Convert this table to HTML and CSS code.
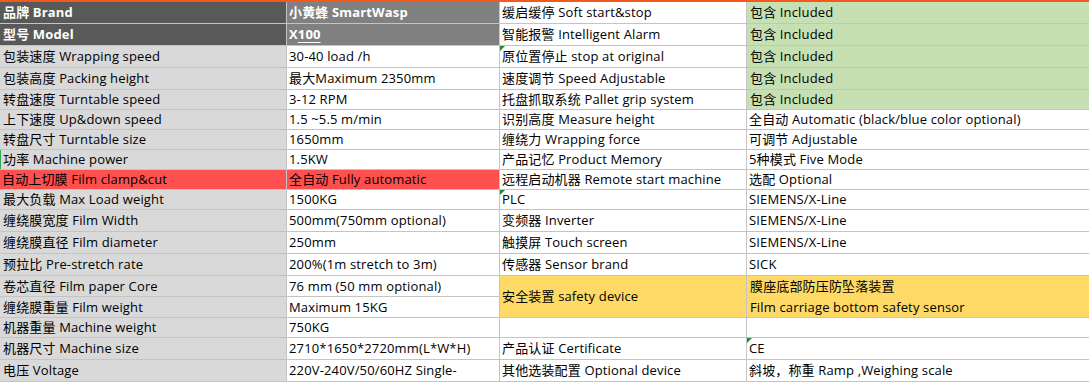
FILE: index.html
```html
<!DOCTYPE html>
<html lang="zh-CN">
<head>
<meta charset="utf-8">
<title>SmartWasp X100</title>
<link rel="stylesheet" href="styles.css">
</head>
<body>
<div class="sheet">
  <div class="c hd-a">品牌 Brand</div>
  <div class="c hd-b">小黄蜂 SmartWasp</div>
  <div class="c w">缓启缓停 Soft start&amp;stop</div>
  <div class="c green">包含 Included</div>

  <div class="c hd-a">型号 Model</div>
  <div class="c hd-b">X<span class="ul">100</span></div>
  <div class="c w">智能报警 Intelligent Alarm</div>
  <div class="c green">包含 Included</div>

  <div class="c g">包装速度 Wrapping speed</div>
  <div class="c w">30-40 load /h</div>
  <div class="c w note">原位置停止 stop at original</div>
  <div class="c green">包含 Included</div>

  <div class="c g">包装高度 Packing height</div>
  <div class="c w">最大Maximum 2350mm</div>
  <div class="c w">速度调节 Speed Adjustable</div>
  <div class="c green">包含 Included</div>

  <div class="c g">转盘速度 Turntable speed</div>
  <div class="c w">3-12 RPM</div>
  <div class="c w">托盘抓取系统 Pallet grip system</div>
  <div class="c green">包含 Included</div>

  <div class="c g">上下速度 Up&amp;down speed</div>
  <div class="c w">1.5 ~5.5 m/min</div>
  <div class="c w">识别高度 Measure height</div>
  <div class="c w">全自动 Automatic (black/blue color optional)</div>

  <div class="c g">转盘尺寸 Turntable size</div>
  <div class="c w">1650mm</div>
  <div class="c w">缠绕力 Wrapping force</div>
  <div class="c w">可调节 Adjustable</div>

  <div class="c g mark">功率 Machine power</div>
  <div class="c w">1.5KW</div>
  <div class="c w">产品记忆 Product Memory</div>
  <div class="c w">5种模式 Five Mode</div>

  <div class="c red">自动上切膜 Film clamp&amp;cut</div>
  <div class="c red">全自动 Fully automatic</div>
  <div class="c w">远程启动机器 Remote start machine</div>
  <div class="c w">选配 Optional</div>

  <div class="c g">最大负载 Max Load weight</div>
  <div class="c w">1500KG</div>
  <div class="c w note">PLC</div>
  <div class="c w">SIEMENS/X-Line</div>

  <div class="c g">缠绕膜宽度 Film Width</div>
  <div class="c w">500mm(750mm optional)</div>
  <div class="c w">变频器 Inverter</div>
  <div class="c w">SIEMENS/X-Line</div>

  <div class="c g">缠绕膜直径 Film diameter</div>
  <div class="c w">250mm</div>
  <div class="c w">触摸屏 Touch screen</div>
  <div class="c w">SIEMENS/X-Line</div>

  <div class="c g">预拉比 Pre-stretch rate</div>
  <div class="c w">200%(1m stretch to 3m)</div>
  <div class="c w">传感器 Sensor brand</div>
  <div class="c w">SICK</div>

  <div class="c g">卷芯直径 Film paper Core</div>
  <div class="c w">76 mm (50 mm optional)</div>
  <div class="c yellow span2">安全装置 safety device</div>
  <div class="c yellow span2 stack"><span class="line">膜座底部防压防坠落装置</span><span class="line">Film carriage bottom safety sensor</span></div>

  <div class="c g">缠绕膜重量 Film weight</div>
  <div class="c w">Maximum 15KG</div>

  <div class="c g">机器重量 Machine weight</div>
  <div class="c w">750KG</div>
  <div class="c w"></div>
  <div class="c w"></div>

  <div class="c g">机器尺寸 Machine size</div>
  <div class="c w">2710*1650*2720mm(L*W*H)</div>
  <div class="c w">产品认证 Certificate</div>
  <div class="c w note">CE</div>

  <div class="c g">电压 Voltage</div>
  <div class="c w">220V-240V/50/60HZ Single-</div>
  <div class="c w">其他选装配置 Optional device</div>
  <div class="c w">斜坡，称重 Ramp ,Weighing scale</div>
</div>
</body>
</html>
```

FILE: styles.css
```css
html, body {
  margin: 0;
  padding: 0;
  background: #ffffff;
}

.sheet {
  display: grid;
  width: 1089px;
  grid-template-columns: 286px 212px 246px 1fr;
  grid-template-rows: 21px 21px 21px 21px 19px 19px 19px 19px 19px 19px 21px 21px 21px 20px 20px 19px 21px 21px;
  gap: 1px;
  background: #c4c4c4;
  border-top: 2px solid #f3591f;
  border-bottom: 1px solid #c4c4c4;
  font-family: "Open Sans", "Noto Sans CJK SC", sans-serif;
  font-size: 13px;
  letter-spacing: 0.15px;
  color: #000;
}

.c {
  position: relative;
  display: flex;
  align-items: center;
  padding-left: 2px;
  white-space: nowrap;
  overflow: hidden;
  line-height: 1;
}

.hd-a {
  background: #595959;
  color: #fff;
  font-weight: 700;
  padding-left: 3px;
}

.hd-b {
  background: #808080;
  color: #fff;
  font-weight: 700;
}

.ul {
  text-decoration: underline;
  text-underline-offset: 3px;
}

.g {
  background: #d9d9d9;
  padding-left: 3px;
}

.w {
  background: #ffffff;
}

.green {
  background: #c6e0b4;
  padding-left: 3px;
}

.red {
  background: #ff5050;
}

.yellow {
  background: #ffd966;
}

.span2 {
  grid-row: span 2;
}

.stack {
  flex-direction: column;
  align-items: flex-start;
  justify-content: center;
  padding-left: 3px;
}

.stack .line {
  display: block;
  line-height: 21px;
}

.note::before {
  content: "";
  position: absolute;
  left: 0;
  top: 0;
  width: 0;
  height: 0;
  border-top: 5px solid #1f8a3a;
  border-right: 5px solid transparent;
}

.mark {
  box-shadow: inset 1px 0 0 #2fa84f;
}
```
